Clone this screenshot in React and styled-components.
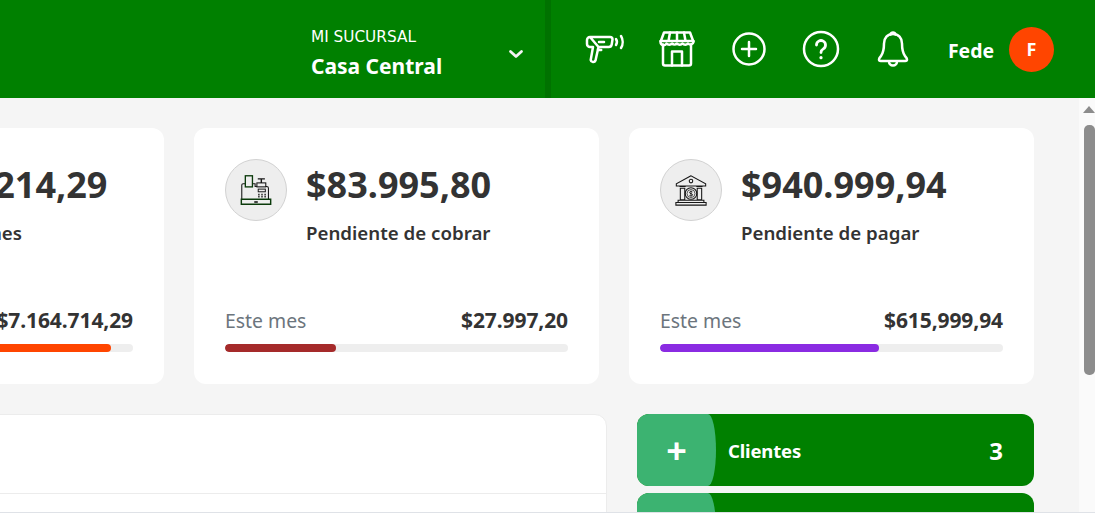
import React from "react";
import styled, { createGlobalStyle } from "styled-components";

const Global = createGlobalStyle`
  html, body { margin: 0; padding: 0; height: 100%; overflow: hidden; background: #f5f5f5; }
  * { box-sizing: border-box; }
  body { font-family: "Noto Sans", "Open Sans", "Liberation Sans", sans-serif; }
`;

const Page = styled.div`
  width: 1095px; height: 513px; display: flex; flex-direction: column; overflow: hidden;
  border-bottom: 1px solid #dfe2e7;
`;
const Header = styled.header`
  height: 98px; flex: none; background: #008000; color: #fff;
  display: flex; align-items: stretch; justify-content: flex-end; padding-right: 41px;
`;
const Branch = styled.div`
  width: 234px; display: flex; justify-content: space-between; align-items: center; padding-right: 21px;
`;
const BranchText = styled.div`
  display: flex; flex-direction: column; padding-top: 9px;
`;
const BranchLabel = styled.span`
  font: 400 15.3px/20px "DejaVu Sans", sans-serif; margin-bottom: 5px;
`;
const BranchName = styled.span`
  font-size: 21px; line-height: 28px; font-weight: 700;
`;
const Chevron = styled.svg`
  width: 16px; height: 16px; margin-top: 10px; fill: none; stroke: #f3f3f3; stroke-width: 2.8;
  stroke-linecap: round; stroke-linejoin: round;
`;
const Divider = styled.div`
  width: 6px; background: #007200; margin-right: 18px;
`;
const IconSlot = styled.button`
  width: 72px; padding: 0; border: 0; background: none; display: flex; align-items: center; justify-content: center;
`;
const HeaderIcon = styled.svg`
  fill: none; stroke: #fff; stroke-width: 2.5; stroke-linecap: round; stroke-linejoin: round; overflow: visible;
`;
const User = styled.div`
  display: flex; align-items: center; margin-left: 19px; gap: 15px;
`;
const UserName = styled.span`
  font-size: 19.4px; font-weight: 700; margin-top: 2px;
`;
const Avatar = styled.div`
  width: 45px; height: 45px; border-radius: 50%; background: #ff4500; display: flex; align-items: center; justify-content: center;
  font-size: 18px; font-weight: 700;
`;
const Body = styled.div`
  flex: 1; min-height: 0; display: flex;
`;
const Main = styled.main`
  flex: 1; min-width: 0; background: #f5f5f5; padding-top: 30px; display: flex; flex-direction: column; gap: 30px; overflow: hidden;
`;
const Cards = styled.section`
  display: grid; grid-template-columns: repeat(3, 405px); gap: 30px; margin-left: -241px; flex: none;
`;
const Card = styled.article`
  height: 256px; background: #fff; border-radius: 12px; padding: 31px 31px 32px; display: flex; flex-direction: column;
`;
const CardTop = styled.div`
  display: flex; gap: 19px; flex: 1;
`;
const IconCircle = styled.div`
  width: 62px; height: 62px; flex: none; border-radius: 50%; background: #eeeeee; border: 1px solid #d2d2d2;
  display: flex; align-items: center; justify-content: center;
`;
const CardIcon = styled.svg`
  width: 32px; height: 32px; fill: none; stroke: #161616; stroke-width: 1.2; overflow: visible;
`;
const CardText = styled.div`
  display: flex; flex-direction: column; min-width: 0; padding-top: 1px;
`;
const Amount = styled.div`
  font-size: 36px; line-height: 50px; font-weight: 700; color: #333; white-space: nowrap;
`;
const CardLabel = styled.div`
  font-size: 18.7px; line-height: 26px; font-weight: 600; color: #333; margin-top: 10px; white-space: nowrap;
`;
const MonthRow = styled.div`
  display: flex; justify-content: space-between; align-items: center; height: 26px; margin-bottom: 11px;
`;
const MonthLabel = styled.span`
  font-size: 19.4px; color: #6c757d;
`;
const MonthValue = styled.span`
  font-size: 21px; font-weight: 700; color: #333; letter-spacing: -0.1px;
`;
const Track = styled.div`
  height: 8px; border-radius: 4px; background: #eeeeee; overflow: hidden;
`;
const Fill = styled.div`
  height: 100%; border-radius: 4px; background: ${p => p.$color};
`;
const Lower = styled.section`
  display: grid; grid-template-columns: 848px 397px; gap: 30px; margin-left: -241px; flex: none;
`;
const Panel = styled.div`
  height: 120px; background: #fff; border: 1px solid #ececec; border-radius: 12px;
`;
const PanelHead = styled.div`
  height: 79px; border-bottom: 1px solid #ececec;
`;
const Shortcuts = styled.div`
  display: flex; flex-direction: column; gap: 7px;
`;
const Shortcut = styled.div`
  height: 72px; flex: none; background: #008000; border-radius: 12px; overflow: hidden; display: flex; align-items: center; color: #fff;
  padding-right: 31px;
`;
const ShortcutAdd = styled.div`
  width: 79px; height: 100%; flex: none; background: #3cb371; border-radius: 0 8px 8px 0 / 0 50% 50% 0; padding-top: 2px;
  display: flex; align-items: center; justify-content: center; font-size: 36px; font-weight: 700; line-height: 1;
`;
const ShortcutName = styled.span`
  font-size: 18.5px; font-weight: 700; margin-left: 12px; flex: 1; letter-spacing: -0.15px;
`;
const ShortcutCount = styled.span`
  font-size: 24px; font-weight: 700;
`;
const ScrollTrack = styled.div`
  width: 16px; flex: none; background: #fafafa; display: flex; flex-direction: column; align-items: flex-end; padding-top: 8px;
`;
const ScrollArrow = styled.div`
  width: 0; height: 0; border-left: 6px solid transparent; border-right: 6px solid transparent; border-bottom: 7px solid #8c8c8c;
`;
const ScrollThumb = styled.div`
  width: 11px; height: 250px; margin-top: 12px; background: #8c8c8c; border-radius: 5px;
`;

const IconScanner = () => (
  <HeaderIcon width="38" height="31" viewBox="0 0 38 31">
    <path d="M4 3h20a2.500 2.500 0 0 1 2.500 2.500l-.8 5a3 3 0 0 1-3 2.500H12.500l-.8 3h3.500M12.500 13l-3 13.500a2.500 2.500 0 0 1-4.800-.5L7 13H4a3 3 0 0 1-3-3V6a3 3 0 0 1 3-3z" />
    <path d="M13 8h5" />
    <path d="M30 5c1.200 1.800 1.200 4 0 6M35 2c2.200 3.500 2.200 8.500 0 12" />
  </HeaderIcon>
);
const IconStore = () => (
  <HeaderIcon width="36" height="36" viewBox="0 0 36 36">
    <path d="M5 1.500h26l3.500 9.500a3.200 3.200 0 0 1-5.500 1.500 3.600 3.600 0 0 1-5.500 0 3.600 3.600 0 0 1-5.500 0 3.600 3.600 0 0 1-5 0 3.600 3.600 0 0 1-5.500 0A3.200 3.200 0 0 1 1.500 11z" />
    <path d="M1.500 10h33M11 1.500 9.500 10M18 1.500V10M25 1.500 26.500 10" />
    <path d="M4 13.500V32.500a2 2 0 0 0 2 2h24a2 2 0 0 0 2-2V13.500" />
    <path d="M13 34.500V20.500h10v14" />
  </HeaderIcon>
);
const IconPlus = () => (
  <HeaderIcon width="34" height="34" viewBox="0 0 34 34">
    <circle cx="17" cy="17" r="15.500" />
    <path d="M17 10v14M10 17h14" />
  </HeaderIcon>
);
const IconHelp = () => (
  <HeaderIcon width="36" height="36" viewBox="0 0 36 36">
    <circle cx="18" cy="18" r="17" />
    <path d="M13.500 14a4.500 4.500 0 1 1 6.800 3.900c-1.500.9-2.300 1.700-2.300 3.600" strokeWidth="2.800" />
    <path d="M18 26.500v.2" strokeWidth="3.200" />
  </HeaderIcon>
);
const IconBell = () => (
  <HeaderIcon width="30" height="38" viewBox="0 0 30 38">
    <path d="M12.500 4.500a2.600 2.600 0 0 1 5 0" />
    <path d="M15 4c-5.500 0-9 4-9 9.500 0 5-.5 9-3 12.500-1 1.300-2 2-2 3.500 0 1 .8 1.500 1.800 1.500h24.400c1 0 1.800-.5 1.800-1.500 0-1.500-1-2.200-2-3.500-2.500-3.500-3-7.500-3-12.500C24 8 20.500 4 15 4z" />
    <path d="M11 31.500a4 4 0 0 0 8 0" />
  </HeaderIcon>
);
const IconRegister = () => (
  <CardIcon viewBox="0 0 36 36">
    <path d="M2 28V12.500a1.500 1.500 0 0 1 1.500-1.500H6M13 11H17v3.500" />
    <rect x="6" y="2" width="8" height="12.500" stroke="#0a3a0a" strokeWidth="1.500" fill="#eee" />
    <path d="M17 14h13a2 2 0 0 1 2 2v12" />
    <rect x="19" y="10" width="10" height="4.500" fill="#eee" />
    <path d="M24 10V6M20 5.500h8" strokeWidth="1.600" />
    <rect x="20.500" y="17" width="8" height="3" strokeWidth="1.100" />
    <path d="M20.500 23h1.500M24 23h1.500M27.500 23h1.500M20.500 25.500h1.500M24 25.500h1.500M27.500 25.500h1.500" strokeWidth="1.800" />
    <path d="M1.500 28.500h33v5.500h-33z" stroke="#0a3a0a" strokeWidth="1.600" />
    <path d="M16 31.500h4" strokeWidth="1.800" />
  </CardIcon>
);
const IconBank = () => (
  <CardIcon viewBox="0 0 36 36">
    <path d="M18 2 1.500 11v2.500h33V11z" fill="#eee" />
    <circle cx="18" cy="8" r="2" />
    <path d="M5 14h7M24 14h7M6 16h5v13H6zM25 16h5v13h-5zM3.500 29.500h29v2.500h-29zM1 32h34v3H1z" />
    <circle cx="18" cy="22" r="6.500" />
    <circle cx="18" cy="22" r="4.500" strokeWidth="0.800" />
    <path d="M19.600 20.200c-.8-.8-3.300-.8-3.300.7 0 1.700 3.500.8 3.500 2.500 0 1.400-2.600 1.500-3.600.6M18 18.800v6.400" strokeWidth="1" />
  </CardIcon>
);

export default function App() {
  return (
    <Page>
      <Global />
      <Header>
        <Branch>
          <BranchText>
            <BranchLabel>MI SUCURSAL</BranchLabel>
            <BranchName>Casa Central</BranchName>
          </BranchText>
          <Chevron viewBox="0 0 16 16"><path d="M2.500 5.500 8 10.500l5.500-5" /></Chevron>
        </Branch>
        <Divider />
        <IconSlot><IconScanner /></IconSlot>
        <IconSlot><IconStore /></IconSlot>
        <IconSlot><IconPlus /></IconSlot>
        <IconSlot><IconHelp /></IconSlot>
        <IconSlot><IconBell /></IconSlot>
        <User>
          <UserName>Fede</UserName>
          <Avatar>F</Avatar>
        </User>
      </Header>
      <Body>
        <Main>
          <Cards>
            <Card>
              <CardTop>
                <IconCircle />
                <CardText>
                  <Amount>$7.164.214,29</Amount>
                  <CardLabel>Total de órdenes</CardLabel>
                </CardText>
              </CardTop>
              <MonthRow>
                <MonthLabel>Este mes</MonthLabel>
                <MonthValue>$7.164.714,29</MonthValue>
              </MonthRow>
              <Track><Fill $color="#ff4500" style={{ width: "93.6%" }} /></Track>
            </Card>
            <Card>
              <CardTop>
                <IconCircle><IconRegister /></IconCircle>
                <CardText>
                  <Amount>$83.995,80</Amount>
                  <CardLabel>Pendiente de cobrar</CardLabel>
                </CardText>
              </CardTop>
              <MonthRow>
                <MonthLabel>Este mes</MonthLabel>
                <MonthValue>$27.997,20</MonthValue>
              </MonthRow>
              <Track><Fill $color="#a52a2a" style={{ width: "32.4%" }} /></Track>
            </Card>
            <Card>
              <CardTop>
                <IconCircle><IconBank /></IconCircle>
                <CardText>
                  <Amount>$940.999,94</Amount>
                  <CardLabel>Pendiente de pagar</CardLabel>
                </CardText>
              </CardTop>
              <MonthRow>
                <MonthLabel>Este mes</MonthLabel>
                <MonthValue>$615,999,94</MonthValue>
              </MonthRow>
              <Track><Fill $color="#8a2be2" style={{ width: "63.9%" }} /></Track>
            </Card>
          </Cards>
          <Lower>
            <Panel><PanelHead /></Panel>
            <Shortcuts>
              <Shortcut>
                <ShortcutAdd>+</ShortcutAdd>
                <ShortcutName>Clientes</ShortcutName>
                <ShortcutCount>3</ShortcutCount>
              </Shortcut>
              <Shortcut><ShortcutAdd /></Shortcut>
            </Shortcuts>
          </Lower>
        </Main>
        <ScrollTrack>
          <ScrollArrow />
          <ScrollThumb />
        </ScrollTrack>
      </Body>
    </Page>
  );
}
